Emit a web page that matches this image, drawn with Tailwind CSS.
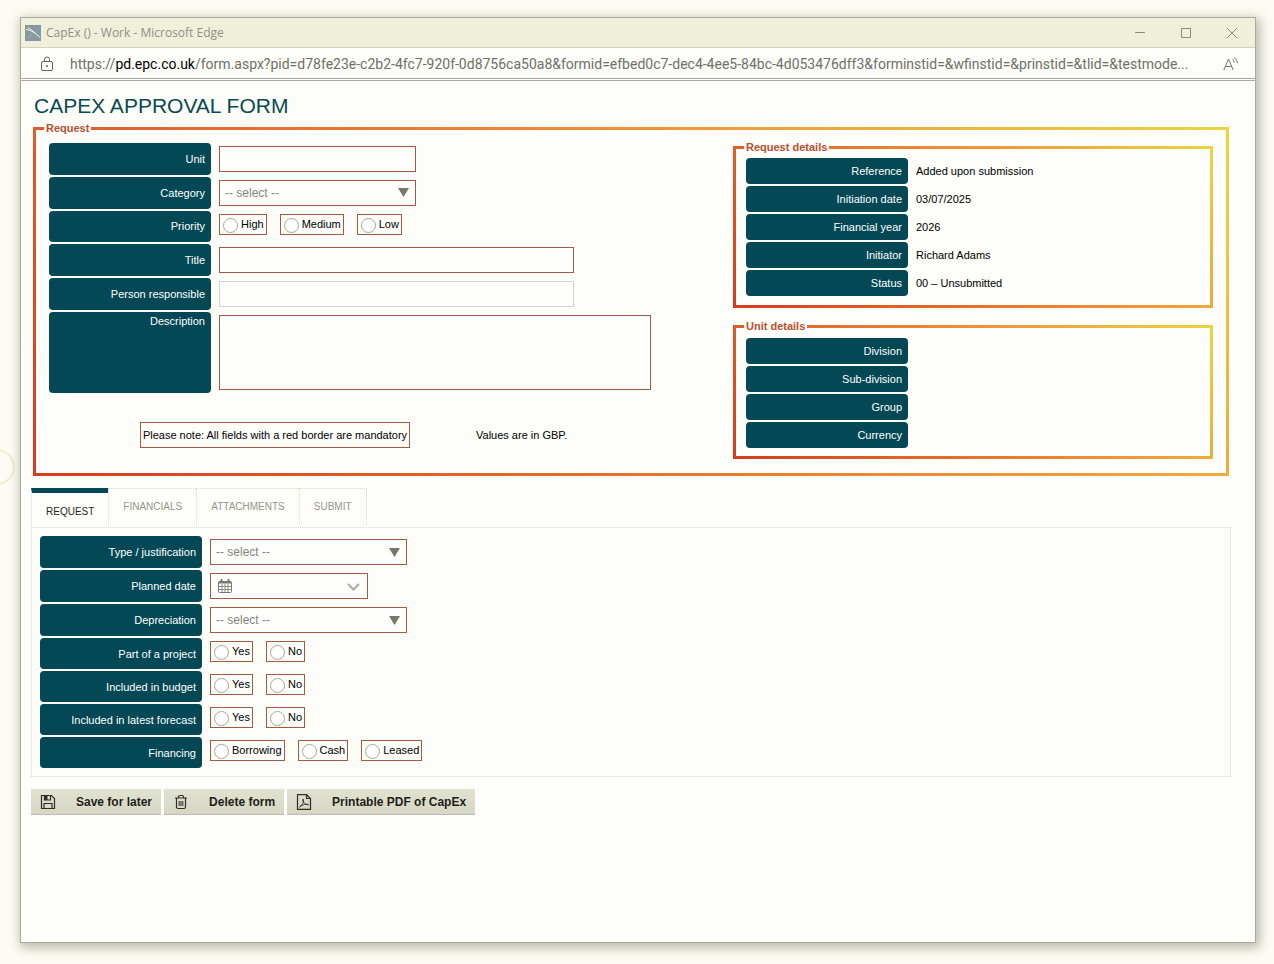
<!DOCTYPE html>
<html lang="en">
<head>
    <meta charset="UTF-8">
    <title>CapEx ()</title>
    <script src="https://cdn.jsdelivr.net/npm/@tailwindcss/browser@4"></script>
</head>
<body class="relative flex min-h-screen flex-col bg-[#fcfcf4] pt-[17px] pr-[18px] pb-[21px] pl-5 font-['Liberation_Sans',Arial,sans-serif] text-[11px] text-black">
    <div class="absolute top-[449px] left-[-21px] h-9 w-9 rounded-full border-2 border-[#eeeecb]"></div>

    <div class="relative flex flex-1 flex-col border border-[#a9a99f] bg-[#fdfdf9] shadow-[2px_3px_10px_2px_rgba(90,90,60,0.4)]">
        <!-- Title bar -->
        <header class="flex h-[30px] items-center border-b border-[#d3d3c4] bg-[#f0f0da] pl-1 font-['Open_Sans','Noto_Sans',sans-serif] text-xs text-[#8f8f86]">
            <svg class="mr-[5px] h-4 w-4" viewBox="0 0 16 16" fill="none">
                <rect width="16" height="16" fill="#8798a0"/>
                <path d="M3 2.500C7 5 10 8 15 12.500M1 4.500C5 5 8 6.500 11 9" stroke="#f4f6f2"/>
                <path d="M3 13L7.500 9" stroke="#a9b6ba"/>
            </svg>
            <span class="flex-1">CapEx () - Work - Microsoft Edge</span>
            <button class="flex w-[46px] justify-center" aria-label="Minimize">
                <svg class="h-3 w-3" viewBox="0 0 12 12" fill="none" stroke="#8a8a80"><path d="M1 5.500h10"/></svg>
            </button>
            <button class="flex w-[46px] justify-center" aria-label="Maximize">
                <svg class="h-3 w-3" viewBox="0 0 12 12" fill="none" stroke="#8a8a80"><path d="M1.500 1.500h9v9h-9z"/></svg>
            </button>
            <button class="flex w-[46px] justify-center" aria-label="Close">
                <svg class="h-3 w-3" viewBox="0 0 12 12" fill="none" stroke="#8a8a80"><path d="M1 1l10 10M11 1L1 11"/></svg>
            </button>
        </header>

        <!-- Address bar -->
        <div class="flex h-[33px] items-center border-b-3 border-double border-[#a9a99f] pt-[2px] pr-4 pl-[19px] font-[Roboto,'Open_Sans',sans-serif] text-sm text-[#707068]">
            <svg class="mr-[16px] h-4 w-[14px] shrink-0" viewBox="0 0 14 16" fill="none" stroke="#66665e">
                <rect x="1.500" y="5.500" width="11" height="9" rx="1.500"/>
                <path d="M4.500 5.500V3.500a2.500 2.500 0 0 1 5 0v2"/>
                <circle cx="7" cy="10" r=".6" fill="#66665e"/>
            </svg>
            <span class="flex-1 whitespace-nowrap">https://<span class="text-black">pd.epc.co.uk</span>/form.aspx?pid=d78fe23e-c2b2-4fc7-920f-0d8756ca50a8&amp;formid=efbed0c7-dec4-4ee5-84bc-4d053476dff3&amp;forminstid=&amp;wfinstid=&amp;prinstid=&amp;tlid=&amp;testmode...</span>
            <svg class="h-4 w-4 shrink-0" viewBox="0 0 16 16" fill="none" stroke="#77776e">
                <path d="M.8 14L5.500 3l4.700 11M2.400 10.500h6.200M9.500 3.200a4.500 4.500 0 0 1 1.800 3.600M11 1.200a7.500 7.500 0 0 1 3.500 6"/>
            </svg>
        </div>

        <main class="pr-6 pl-[10px]">
            <h1 class="mt-3 ml-[3px] text-[21px] leading-[26px] text-[#0b4a4e]">CAPEX APPROVAL FORM</h1>

            <fieldset class="mx-[2px] mt-[3px] border-3 px-2 pt-[6px] pb-[14px] [border-image:linear-gradient(45deg,#d63c1e,#f0963c_65%,#ead440)_1]">
                <legend class="px-[2px] text-[11px] leading-[13px] font-bold text-[#b8502e]">Request</legend>
                <div class="flex px-[5px]">
                    <div class="flex-1 pt-[2px]">
                        <div class="flex flex-col gap-[2px]">
                            <div class="flex gap-2">
                                <label for="unit" class="flex h-8 w-[162px] items-center justify-end rounded bg-[#034854] pr-[6px] text-white">Unit</label>
                                <input id="unit" type="text" class="mt-[3px] h-[26px] w-[197px] border border-[#a85a40] bg-white/50 px-[6px] text-xs">
                            </div>
                            <div class="flex gap-2">
                                <label for="category" class="flex h-8 w-[162px] items-center justify-end rounded bg-[#034854] pr-[6px] text-white">Category</label>
                                <div class="relative mt-[3px] h-[26px] w-[197px]">
                                    <select id="category" class="h-full w-full appearance-none border border-[#a85a40] bg-white/50 px-[5px] text-xs text-[#85857c]"><option>-- select --</option></select>
                                    <svg class="pointer-events-none absolute top-2 right-[7px] h-[9px] w-[11px]" viewBox="0 0 11 9"><path d="M0 0h11L5.500 9z" fill="#77776c"/></svg>
                                </div>
                            </div>
                            <div class="flex gap-2">
                                <span class="flex h-[31px] w-[162px] items-center justify-end rounded bg-[#034854] pr-[6px] text-white">Priority</span>
                                <div class="mt-[3px] flex h-[21px] gap-[13px]">
                                    <label class="flex gap-[3px] border border-[#a85a40] pr-[2px] pl-[3px] leading-[18px]"><input type="radio" name="priority" class="mt-[3px] h-[15px] w-[15px] appearance-none rounded-full border border-[#a6a69a] bg-white">High</label>
                                    <label class="flex gap-[3px] border border-[#a85a40] pr-[2px] pl-[3px] leading-[18px]"><input type="radio" name="priority" class="mt-[3px] h-[15px] w-[15px] appearance-none rounded-full border border-[#a6a69a] bg-white">Medium</label>
                                    <label class="flex gap-[3px] border border-[#a85a40] pr-[2px] pl-[3px] leading-[18px]"><input type="radio" name="priority" class="mt-[3px] h-[15px] w-[15px] appearance-none rounded-full border border-[#a6a69a] bg-white">Low</label>
                                </div>
                            </div>
                            <div class="flex gap-2">
                                <label for="title" class="flex h-8 w-[162px] items-center justify-end rounded bg-[#034854] pr-[6px] text-white">Title</label>
                                <input id="title" type="text" class="mt-[3px] h-[26px] w-[355px] border border-[#a85a40] bg-white/50 px-[6px] text-xs">
                            </div>
                            <div class="flex gap-2">
                                <label for="person" class="flex h-8 w-[162px] items-center justify-end rounded bg-[#034854] pr-[6px] text-white">Person responsible</label>
                                <input id="person" type="text" class="mt-[3px] h-[26px] w-[355px] border border-[#d4d4cc] bg-white/50 px-[6px] text-xs">
                            </div>
                            <div class="flex gap-2">
                                <label for="description" class="flex h-[81px] w-[162px] justify-end rounded bg-[#034854] pt-[2px] pr-[6px] leading-[14px] text-white">Description</label>
                                <textarea id="description" class="mt-[3px] h-[75px] w-[432px] resize-none border border-[#a85a40] bg-white/50 px-[6px] text-xs"></textarea>
                            </div>
                        </div>
                        <div class="mt-[29px] ml-[91px] flex items-center gap-[66px]">
                            <p class="flex h-[26px] w-[270px] items-center justify-center border border-[#a85a40]">Please note: All fields with a red border are mandatory</p>
                            <p>Values are in GBP.</p>
                        </div>
                    </div>

                    <div class="flex w-[480px] flex-col gap-3">
                        <fieldset class="border-3 px-2 pt-1 pb-[9px] [border-image:linear-gradient(45deg,#d63c1e,#f0963c_65%,#ead440)_1]">
                            <legend class="px-[2px] text-[11px] leading-[13px] font-bold text-[#b8502e]">Request details</legend>
                            <dl class="grid grid-cols-[162px_1fr] items-center gap-x-2 gap-y-[2px] pl-[2px]">
                                <dt class="flex h-[26px] items-center justify-end rounded bg-[#034854] pr-[6px] text-white">Reference</dt><dd>Added upon submission</dd>
                                <dt class="flex h-[26px] items-center justify-end rounded bg-[#034854] pr-[6px] text-white">Initiation date</dt><dd>03/07/2025</dd>
                                <dt class="flex h-[26px] items-center justify-end rounded bg-[#034854] pr-[6px] text-white">Financial year</dt><dd>2026</dd>
                                <dt class="flex h-[26px] items-center justify-end rounded bg-[#034854] pr-[6px] text-white">Initiator</dt><dd>Richard Adams</dd>
                                <dt class="flex h-[26px] items-center justify-end rounded bg-[#034854] pr-[6px] text-white">Status</dt><dd>00 – Unsubmitted</dd>
                            </dl>
                        </fieldset>
                        <fieldset class="border-3 px-2 pt-[5px] pb-2 [border-image:linear-gradient(45deg,#d63c1e,#f0963c_65%,#ead440)_1]">
                            <legend class="px-[2px] text-[11px] leading-[13px] font-bold text-[#b8502e]">Unit details</legend>
                            <dl class="grid grid-cols-[162px_1fr] items-center gap-x-2 gap-y-[2px] pl-[2px]">
                                <dt class="flex h-[26px] items-center justify-end rounded bg-[#034854] pr-[6px] text-white">Division</dt><dd></dd>
                                <dt class="flex h-[26px] items-center justify-end rounded bg-[#034854] pr-[6px] text-white">Sub-division</dt><dd></dd>
                                <dt class="flex h-[26px] items-center justify-end rounded bg-[#034854] pr-[6px] text-white">Group</dt><dd></dd>
                                <dt class="flex h-[26px] items-center justify-end rounded bg-[#034854] pr-[6px] text-white">Currency</dt><dd></dd>
                            </dl>
                        </fieldset>
                    </div>
                </div>
            </fieldset>

            <!-- Tabs -->
            <nav class="mt-3 flex h-[39px] text-[10px] text-[#96968a]">
                <button class="border-t-5 border-l border-t-[#034854] border-l-[#ececdc] px-[14px] pt-[2px] text-[#26261f]">REQUEST</button>
                <button class="h-9 border-t border-l border-dotted border-[#d9d9c6] px-[14px]">FINANCIALS</button>
                <button class="h-9 border-t border-l border-dotted border-[#d9d9c6] px-[14px]">ATTACHMENTS</button>
                <button class="h-9 border-x border-t border-dotted border-[#d9d9c6] px-[14px]">SUBMIT</button>
            </nav>
            <section class="flex flex-col gap-[2px] border border-dotted border-[#d9d9c6] p-2">
                <div class="flex gap-2">
                    <label for="type" class="flex h-8 w-[162px] items-center justify-end rounded bg-[#034854] pr-[6px] text-white">Type / justification</label>
                    <div class="relative mt-[3px] h-[26px] w-[197px]">
                        <select id="type" class="h-full w-full appearance-none border border-[#a85a40] bg-white/50 px-[5px] text-xs text-[#85857c]"><option>-- select --</option></select>
                        <svg class="pointer-events-none absolute top-[9px] right-[7px] h-[9px] w-[11px]" viewBox="0 0 11 9"><path d="M0 0h11L5.500 9z" fill="#77776c"/></svg>
                    </div>
                </div>
                <div class="flex gap-2">
                    <label for="planned" class="flex h-8 w-[162px] items-center justify-end rounded bg-[#034854] pr-[6px] text-white">Planned date</label>
                    <div class="relative mt-[3px] h-[26px] w-[158px]">
                        <input id="planned" type="text" class="h-full w-full border border-[#a85a40] bg-white/50 px-7 text-xs">
                        <svg class="pointer-events-none absolute top-[6px] left-2 h-[14px] w-[14px]" viewBox="0 0 14 14" fill="none" stroke="#77776c">
                            <rect x=".5" y="2.500" width="13" height="11" rx="1"/>
                            <path d="M1 3h12v1H1z" fill="#77776c"/>
                            <path d="M3.500 0v4M10.500 0v4" stroke-width="2"/>
                            <path d="M1 7.500h12M1 10.500h12M4 5v8.500M7 5v8.500M10 5v8.500" stroke-width=".8"/>
                        </svg>
                        <svg class="pointer-events-none absolute top-[10px] right-2 h-2 w-[13px]" viewBox="0 0 13 8" fill="none" stroke="#b4b4a6" stroke-width="2.400"><path d="M1 1l5.500 5.500L12 1"/></svg>
                    </div>
                </div>
                <div class="flex gap-2">
                    <label for="depreciation" class="flex h-8 w-[162px] items-center justify-end rounded bg-[#034854] pr-[6px] text-white">Depreciation</label>
                    <div class="relative mt-[3px] h-[26px] w-[197px]">
                        <select id="depreciation" class="h-full w-full appearance-none border border-[#a85a40] bg-white/50 px-[5px] text-xs text-[#85857c]"><option>-- select --</option></select>
                        <svg class="pointer-events-none absolute top-[9px] right-[7px] h-[9px] w-[11px]" viewBox="0 0 11 9"><path d="M0 0h11L5.500 9z" fill="#77776c"/></svg>
                    </div>
                </div>
                <div class="flex gap-2">
                    <span class="flex h-[31px] w-[162px] items-center justify-end rounded bg-[#034854] pt-px pr-[6px] text-white">Part of a project</span>
                    <div class="mt-[3px] flex h-[21px] gap-[13px]">
                        <label class="flex gap-[3px] border border-[#a85a40] pr-[2px] pl-[3px] leading-[18px]"><input type="radio" name="project" class="mt-[3px] h-[15px] w-[15px] appearance-none rounded-full border border-[#a6a69a] bg-white">Yes</label>
                        <label class="flex gap-[3px] border border-[#a85a40] pr-[2px] pl-[3px] leading-[18px]"><input type="radio" name="project" class="mt-[3px] h-[15px] w-[15px] appearance-none rounded-full border border-[#a6a69a] bg-white">No</label>
                    </div>
                </div>
                <div class="flex gap-2">
                    <span class="flex h-[31px] w-[162px] items-center justify-end rounded bg-[#034854] pt-px pr-[6px] text-white">Included in budget</span>
                    <div class="mt-[3px] flex h-[21px] gap-[13px]">
                        <label class="flex gap-[3px] border border-[#a85a40] pr-[2px] pl-[3px] leading-[18px]"><input type="radio" name="budget" class="mt-[3px] h-[15px] w-[15px] appearance-none rounded-full border border-[#a6a69a] bg-white">Yes</label>
                        <label class="flex gap-[3px] border border-[#a85a40] pr-[2px] pl-[3px] leading-[18px]"><input type="radio" name="budget" class="mt-[3px] h-[15px] w-[15px] appearance-none rounded-full border border-[#a6a69a] bg-white">No</label>
                    </div>
                </div>
                <div class="flex gap-2">
                    <span class="flex h-[31px] w-[162px] items-center justify-end rounded bg-[#034854] pt-px pr-[6px] text-white">Included in latest forecast</span>
                    <div class="mt-[3px] flex h-[21px] gap-[13px]">
                        <label class="flex gap-[3px] border border-[#a85a40] pr-[2px] pl-[3px] leading-[18px]"><input type="radio" name="forecast" class="mt-[3px] h-[15px] w-[15px] appearance-none rounded-full border border-[#a6a69a] bg-white">Yes</label>
                        <label class="flex gap-[3px] border border-[#a85a40] pr-[2px] pl-[3px] leading-[18px]"><input type="radio" name="forecast" class="mt-[3px] h-[15px] w-[15px] appearance-none rounded-full border border-[#a6a69a] bg-white">No</label>
                    </div>
                </div>
                <div class="flex gap-2">
                    <span class="flex h-[31px] w-[162px] items-center justify-end rounded bg-[#034854] pt-px pr-[6px] text-white">Financing</span>
                    <div class="mt-[3px] flex h-[21px] gap-[13px]">
                        <label class="flex gap-[3px] border border-[#a85a40] pr-[2px] pl-[3px] leading-[18px]"><input type="radio" name="financing" class="mt-[3px] h-[15px] w-[15px] appearance-none rounded-full border border-[#a6a69a] bg-white">Borrowing</label>
                        <label class="flex gap-[3px] border border-[#a85a40] pr-[2px] pl-[3px] leading-[18px]"><input type="radio" name="financing" class="mt-[3px] h-[15px] w-[15px] appearance-none rounded-full border border-[#a6a69a] bg-white">Cash</label>
                        <label class="flex gap-[3px] border border-[#a85a40] pr-[2px] pl-[3px] leading-[18px]"><input type="radio" name="financing" class="mt-[3px] h-[15px] w-[15px] appearance-none rounded-full border border-[#a6a69a] bg-white">Leased</label>
                    </div>
                </div>
            </section>

            <!-- Form actions -->
            <div class="mt-3 flex gap-[3px] text-xs font-bold text-[#1f1f1a]">
                <button class="flex h-[26px] items-center gap-5 border-b border-[#bcbcae] bg-linear-to-b from-[#e2e2d0] to-[#d6d6c4] px-[9px]">
                    <svg class="h-4 w-4" viewBox="0 0 16 16" fill="none" stroke="#2e2e28" stroke-width="1.200">
                        <path d="M1.500 1.500H11.500L14.500 4.500V14.500H1.500z"/>
                        <path d="M4.500 1.500V6H10.500V1.500M4 14.500V9.500H12V14.500"/>
                        <path d="M4.500 2h3v4h-3z" fill="#2e2e28" stroke="none"/>
                    </svg>
                    Save for later
                </button>
                <button class="flex h-[26px] items-center gap-5 border-b border-[#bcbcae] bg-linear-to-b from-[#e2e2d0] to-[#d6d6c4] px-[9px]">
                    <svg class="h-4 w-4" viewBox="0 0 16 16" fill="none" stroke="#2e2e28" stroke-width="1.200">
                        <path d="M2 4h12M5.500 4V3q0-1.500 1.500-1.500h2q1.500 0 1.500 1.500v1M3.500 4v9q0 1.500 1.500 1.500h6q1.500 0 1.500-1.500V4"/>
                        <path d="M6.200 7v5M8 7v5M9.800 7v5" stroke-width="1"/>
                    </svg>
                    Delete form
                </button>
                <button class="flex h-[26px] items-center gap-5 border-b border-[#bcbcae] bg-linear-to-b from-[#e2e2d0] to-[#d6d6c4] px-[9px]">
                    <svg class="h-4 w-4" viewBox="0 0 16 16" fill="none" stroke="#2e2e28" stroke-width="1.200">
                        <path d="M1.500.6H10.500L14.500 4.500V15.400H1.500zM10.500.6V4.500H14.500"/>
                        <path d="M3.500 13C6 11.500 8 8 7.500 5.500C7.300 4.500 6.300 5 6.800 6.500C7.500 9 10 11 12.500 10.800C11 9.500 6.500 10.500 3.500 13z" stroke-width=".9"/>
                    </svg>
                    Printable PDF of CapEx
                </button>
            </div>
        </main>
    </div>
</body>
</html>
